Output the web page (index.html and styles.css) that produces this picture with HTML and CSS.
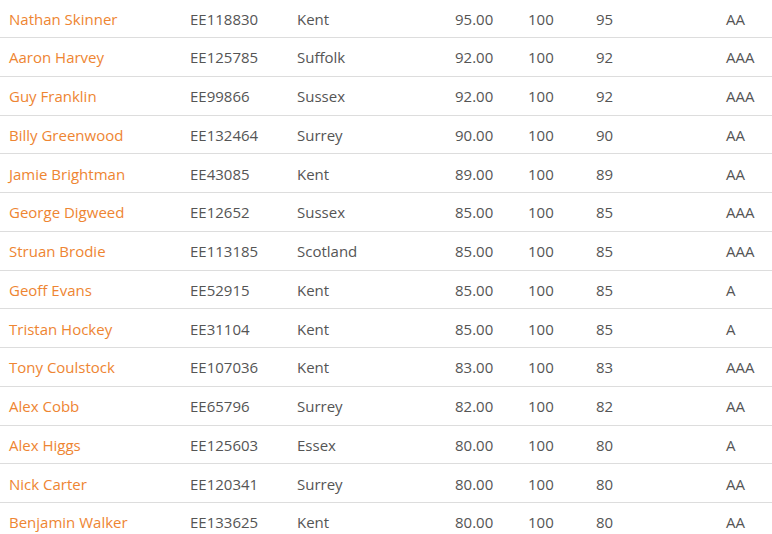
FILE: index.html
```html
<!DOCTYPE html>
<html>
<head>
<meta charset="utf-8">
<link rel="stylesheet" href="styles.css">
</head>
<body>
<div class="table">
  <div class="row"><span class="name">Nathan Skinner</span><span>EE118830</span><span>Kent</span><span>95.00</span><span>100</span><span>95</span><span>AA</span></div>
  <div class="row"><span class="name">Aaron Harvey</span><span>EE125785</span><span>Suffolk</span><span>92.00</span><span>100</span><span>92</span><span>AAA</span></div>
  <div class="row"><span class="name">Guy Franklin</span><span>EE99866</span><span>Sussex</span><span>92.00</span><span>100</span><span>92</span><span>AAA</span></div>
  <div class="row"><span class="name">Billy Greenwood</span><span>EE132464</span><span>Surrey</span><span>90.00</span><span>100</span><span>90</span><span>AA</span></div>
  <div class="row"><span class="name">Jamie Brightman</span><span>EE43085</span><span>Kent</span><span>89.00</span><span>100</span><span>89</span><span>AA</span></div>
  <div class="row"><span class="name">George Digweed</span><span>EE12652</span><span>Sussex</span><span>85.00</span><span>100</span><span>85</span><span>AAA</span></div>
  <div class="row"><span class="name">Struan Brodie</span><span>EE113185</span><span>Scotland</span><span>85.00</span><span>100</span><span>85</span><span>AAA</span></div>
  <div class="row"><span class="name">Geoff Evans</span><span>EE52915</span><span>Kent</span><span>85.00</span><span>100</span><span>85</span><span>A</span></div>
  <div class="row"><span class="name">Tristan Hockey</span><span>EE31104</span><span>Kent</span><span>85.00</span><span>100</span><span>85</span><span>A</span></div>
  <div class="row"><span class="name">Tony Coulstock</span><span>EE107036</span><span>Kent</span><span>83.00</span><span>100</span><span>83</span><span>AAA</span></div>
  <div class="row"><span class="name">Alex Cobb</span><span>EE65796</span><span>Surrey</span><span>82.00</span><span>100</span><span>82</span><span>AA</span></div>
  <div class="row"><span class="name">Alex Higgs</span><span>EE125603</span><span>Essex</span><span>80.00</span><span>100</span><span>80</span><span>A</span></div>
  <div class="row"><span class="name">Nick Carter</span><span>EE120341</span><span>Surrey</span><span>80.00</span><span>100</span><span>80</span><span>AA</span></div>
  <div class="row"><span class="name">Benjamin Walker</span><span>EE133625</span><span>Kent</span><span>80.00</span><span>100</span><span>80</span><span>AA</span></div>
</div>
</body>
</html>
```
FILE: styles.css
```css
html, body {
  margin: 0;
  padding: 0;
  background: #ffffff;
}
body {
  font-family: "Open Sans", "Liberation Sans", sans-serif;
  font-size: 15px;
  color: #555555;
  overflow: hidden;
}
.table {
  display: flex;
  flex-direction: column;
  margin-top: -0.75px;
}
.row {
  display: grid;
  grid-template-columns: 181px 107px 158px 73px 68px 130px 1fr;
  height: 37.75px;
  align-items: center;
  padding-left: 1px;
  border-bottom: 1px solid #dddddd;
}
.row span {
  padding-left: 8px;
  padding-top: 1px;
  white-space: nowrap;
}
.row .name {
  color: #ee8532;
}
```
